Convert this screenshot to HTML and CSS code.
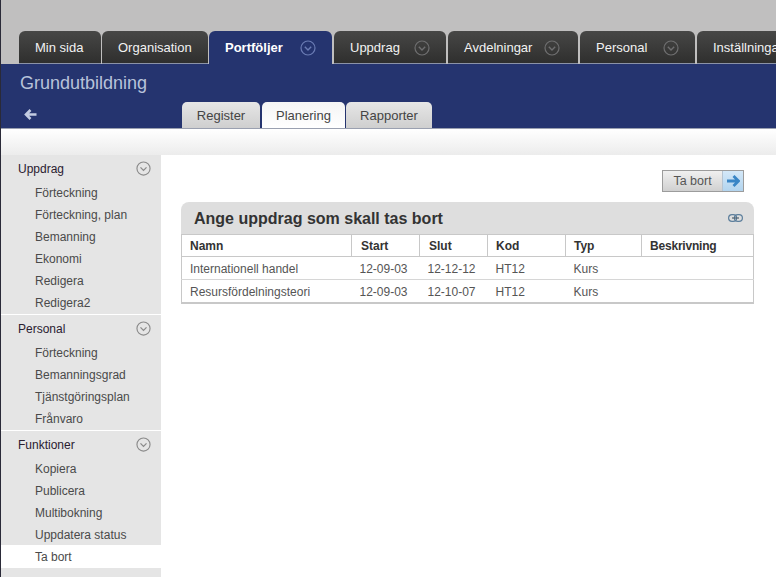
FILE: index.html
```html
<!DOCTYPE html>
<html lang="sv">
<head>
<meta charset="utf-8">
<title>Grundutbildning</title>
<link rel="stylesheet" href="styles.css">
</head>
<body>
<svg class="defs" width="0" height="0" aria-hidden="true">
  <symbol id="chev" viewBox="0 0 16 16">
    <circle cx="8" cy="8" r="7" fill="none" stroke="currentColor" stroke-width="1.200"/>
    <path d="M4.800 6.800 8 10l3.200-3.200" fill="none" stroke="currentColor" stroke-width="1.400"/>
  </symbol>
</svg>
<header class="top">
  <nav class="tabs">
    <a class="tab tab-a">Min sida</a>
    <a class="tab tab-b">Organisation</a>
    <a class="tab tab-c active">Portföljer<svg class="chev"><use href="#chev"/></svg></a>
    <a class="tab tab-d">Uppdrag<svg class="chev"><use href="#chev"/></svg></a>
    <a class="tab tab-e">Avdelningar<svg class="chev"><use href="#chev"/></svg></a>
    <a class="tab tab-f">Personal<svg class="chev"><use href="#chev"/></svg></a>
    <a class="tab tab-g">Inställningar</a>
  </nav>
</header>
<section class="band">
  <h1 class="band-title">Grundutbildning</h1>
  <div class="band-row">
    <svg class="back" width="13" height="11" viewBox="0 0 13 11"><path d="M6.500 1 2 5.500l4.500 4.500M2.500 5.500H12.500" fill="none" stroke="#c3cce2" stroke-width="2.600"/></svg>
    <div class="subtabs">
      <a class="subtab sub-a">Register</a>
      <a class="subtab sub-b current">Planering</a>
      <a class="subtab sub-c">Rapporter</a>
    </div>
  </div>
</section>
<div class="shade"></div>
<div class="body">
  <aside class="side">
    <div class="group">
      <div class="group-head">Uppdrag<svg class="chev-side"><use href="#chev"/></svg></div>
      <a class="item">Förteckning</a>
      <a class="item">Förteckning, plan</a>
      <a class="item">Bemanning</a>
      <a class="item">Ekonomi</a>
      <a class="item">Redigera</a>
      <a class="item">Redigera2</a>
    </div>
    <div class="group">
      <div class="group-head">Personal<svg class="chev-side"><use href="#chev"/></svg></div>
      <a class="item">Förteckning</a>
      <a class="item">Bemanningsgrad</a>
      <a class="item">Tjänstgöringsplan</a>
      <a class="item">Frånvaro</a>
    </div>
    <div class="group last">
      <div class="group-head">Funktioner<svg class="chev-side"><use href="#chev"/></svg></div>
      <a class="item">Kopiera</a>
      <a class="item">Publicera</a>
      <a class="item">Multibokning</a>
      <a class="item">Uppdatera status</a>
      <a class="item selected">Ta bort</a>
    </div>
    <div class="side-rest"></div>
  </aside>
  <main class="main">
    <div class="actions">
      <a class="btn"><span class="btn-label">Ta bort</span><span class="btn-icon"><svg width="14" height="12" viewBox="0 0 14 12"><path d="M7.500 1 12.500 6l-5 5M12 6H1" fill="none" stroke="#3a86c6" stroke-width="2.800"/></svg></span></a>
    </div>
    <section class="panel">
      <div class="panel-head">
        <h2 class="panel-title">Ange uppdrag som skall tas bort</h2>
        <svg class="link" width="15" height="8" viewBox="0 0 15 8"><rect x="0.600" y="0.600" width="8" height="6.800" rx="3.400" fill="none" stroke="#5d7f9c" stroke-width="1.200"/><rect x="6.400" y="0.600" width="8" height="6.800" rx="3.400" fill="none" stroke="#5d7f9c" stroke-width="1.200"/><path d="M4 4h7" stroke="#4f6170" stroke-width="1.200"/></svg>
      </div>
      <table class="grid">
        <thead>
          <tr><th class="c-name">Namn</th><th class="c-start">Start</th><th class="c-end">Slut</th><th class="c-code">Kod</th><th class="c-type">Typ</th><th class="c-desc">Beskrivning</th></tr>
        </thead>
        <tbody>
          <tr><td>Internationell handel</td><td>12-09-03</td><td>12-12-12</td><td>HT12</td><td>Kurs</td><td></td></tr>
          <tr><td>Resursfördelningsteori</td><td>12-09-03</td><td>12-10-07</td><td>HT12</td><td>Kurs</td><td></td></tr>
        </tbody>
      </table>
    </section>
  </main>
</div>
</body>
</html>
```
FILE: styles.css
```css
* { box-sizing: border-box; }
html, body { margin: 0; height: 100%; overflow: hidden; }
body {
  width: 776px;
  height: 577px;
  font-family: "Liberation Sans", Arial, sans-serif;
  font-size: 12px;
  color: #444;
  background: #fff;
  border-left: 1px solid #2a2a38;
}
.defs { position: absolute; }

.top {
  height: 64px;
  margin-left: -1px;
  padding: 31px 0 0 19px;
  background: #c0bfbf;
  overflow: hidden;
}
.tabs { display: flex; gap: 1px; height: 33px; width: 800px; }
.tab {
  display: flex;
  align-items: center;
  height: 33px;
  padding: 1px 0 0 16px;
  border-radius: 6px 6px 0 0;
  background: linear-gradient(#474746, #2f2f2e);
  border-bottom: 1px solid #8b93a8;
  color: #f2f2f2;
  font-size: 13px;
  flex: none;
}
.tab-a { width: 82px; }
.tab-b { width: 106px; }
.tab-c { width: 123px; }
.tab-d { width: 112px; margin-left: 1px; }
.tab-e { width: 130px; margin-left: 1px; }
.tab-f { width: 115px; margin-left: 1px; }
.tab-g { width: 100px; margin-left: 1px; }
.tab.active {
  background: #25346f;
  border-bottom-color: #25346f;
  color: #fff;
  font-weight: bold;
}
.chev { width: 16px; height: 16px; margin-left: 14px; color: #6f6f70; }
.tab-e .chev { margin-left: 12px; }
.tab-f .chev { margin-left: 16px; }
.tab.active .chev { margin-left: 17px; color: #6b7cb4; }

.band {
  height: 64px;
  background: #25346f;
  padding-left: 19px;
}
.band-title {
  margin: 0;
  padding-top: 8px;
  height: 38px;
  font-size: 18px;
  line-height: 22px;
  font-weight: normal;
  color: #b8c3da;
}
.band-row { display: flex; align-items: flex-end; height: 26px; }
.back { margin: 0 0 8px 4px; flex: none; }
.subtabs { display: flex; margin-left: 145px; gap: 1px; }
.subtab {
  display: flex;
  align-items: center;
  justify-content: center;
  height: 26px;
  border-radius: 5px 5px 0 0;
  background: linear-gradient(#e6e6e6, #cfcfcf);
  color: #444;
  font-size: 13px;
}
.sub-a { width: 78px; margin-right: 1px; }
.sub-b { width: 83px; }
.sub-c { width: 86px; }
.subtab.current { background: linear-gradient(#f4f4f4, #fff); }

.shade {
  height: 27px;
  border-top: 1px solid #9aa0b0;
  background: linear-gradient(#fff, #ececec);
}

.body { display: flex; height: 422px; }
.side { width: 160px; flex: none; display: flex; flex-direction: column; background: #e5e5e5; }
.group { padding-bottom: 1px; border-bottom: 1px solid #fff; }
.group.last { border-bottom: 0; padding-bottom: 0; }
.group-head {
  display: flex;
  align-items: center;
  justify-content: space-between;
  height: 26px;
  padding: 2px 10px 0 17px;
  color: #2a2030;
  font-size: 12px;
}
.chev-side { width: 15px; height: 15px; margin-top: -2px; color: #8a8a8a; }
.item { display: flex; align-items: center; height: 22px; padding: 2px 0 0 34px; color: #4a4a4a; font-size: 12px; }
.item.selected { height: 23px; padding-top: 0; background: #fff; }
.side-rest { margin-top: 4px; flex: 1; }

.main { flex: 1; min-width: 0; padding: 15px 22px 0 20px; background: #fff; }
.actions { display: flex; justify-content: flex-end; height: 32px; padding-right: 10px; }
.btn { display: flex; width: 82px; height: 22px; border: 1px solid #9c9c9c; color: #555; font-size: 12.500px; }
.btn-label {
  display: flex;
  align-items: center;
  justify-content: center;
  width: 60px;
  padding-bottom: 1px;
  background: linear-gradient(#f0f0f0, #d0d0d0);
  border-right: 1px solid #b5c4d2;
}
.btn-icon {
  display: flex;
  align-items: center;
  justify-content: center;
  flex: 1;
  background: linear-gradient(#d4e8f8, #b2d4ee);
}

.panel { width: 573px; }
.panel-head {
  display: flex;
  align-items: center;
  justify-content: space-between;
  height: 32px;
  padding: 0 11px 0 13px;
  background: #dedede;
  border-radius: 8px 8px 0 0;
}
.panel-title { margin: 0; padding-top: 1px; font-size: 16px; line-height: 32px; font-weight: bold; color: #333; }
.grid {
  width: 100%;
  table-layout: fixed;
  border-collapse: collapse;
  border: 1px solid #c8c8c8;
  border-bottom-width: 2px;
  background: #fff;
}
.grid th {
  height: 22px;
  padding: 0 0 0 8px;
  text-align: left;
  font-size: 12px;
  color: #333;
  border-left: 1px solid #c8c8c8;
  border-bottom: 1px solid #c8c8c8;
}
.grid th:first-child { border-left: 0; }
.grid td { height: 23px; padding: 2px 0 0 8px; color: #555; border-bottom: 1px solid #d6d6d6; }
.grid tr:last-child td { border-bottom: 0; }
.grid .c-start, .grid .c-end { padding-left: 9px; }
.c-name { width: 170px; }
.c-start { width: 68px; }
.c-end { width: 68px; }
.c-code { width: 78px; }
.c-type { width: 76px; }
.c-desc { letter-spacing: -0.200px; }
```
